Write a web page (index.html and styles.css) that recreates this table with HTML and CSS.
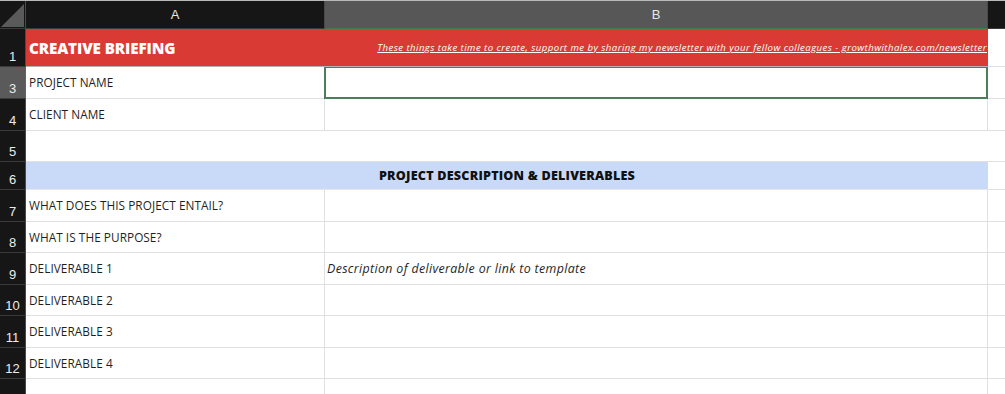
FILE: index.html
```html
<!DOCTYPE html>
<html lang="en">
<head>
<meta charset="utf-8">
<title>Creative Briefing</title>
<link rel="stylesheet" href="styles.css">
</head>
<body>
<div class="sheet">
  <div class="row head-row">
    <div class="corner"><span class="corner-tri"></span></div>
    <div class="colhead">A</div>
    <div class="colhead sel">B</div>
    <div class="colhead last"></div>
  </div>

  <div class="row r1">
    <div class="rowhead">1</div>
    <div class="cell span title-cell">
      <span class="title">CREATIVE BRIEFING</span>
      <span class="note">These things take time to create, support me by sharing my newsletter with your fellow colleagues - growthwithalex.com/newsletter</span>
    </div>
    <div class="cell extra"></div>
  </div>

  <div class="row r3">
    <div class="rowhead sel">3</div>
    <div class="cell a">PROJECT NAME</div>
    <div class="cell b active"><span class="handle"></span></div>
    <div class="cell extra"></div>
  </div>

  <div class="row r4">
    <div class="rowhead">4</div>
    <div class="cell a">CLIENT NAME</div>
    <div class="cell b"></div>
    <div class="cell extra"></div>
  </div>

  <div class="row r5">
    <div class="rowhead">5</div>
    <div class="cell span"></div>
    <div class="cell extra"></div>
  </div>

  <div class="row r6">
    <div class="rowhead">6</div>
    <div class="cell span section">PROJECT DESCRIPTION &amp; DELIVERABLES</div>
    <div class="cell extra"></div>
  </div>

  <div class="row r7">
    <div class="rowhead">7</div>
    <div class="cell a">WHAT DOES THIS PROJECT ENTAIL?</div>
    <div class="cell b"></div>
    <div class="cell extra"></div>
  </div>

  <div class="row r8">
    <div class="rowhead">8</div>
    <div class="cell a">WHAT IS THE PURPOSE?</div>
    <div class="cell b"></div>
    <div class="cell extra"></div>
  </div>

  <div class="row r9">
    <div class="rowhead">9</div>
    <div class="cell a">DELIVERABLE 1</div>
    <div class="cell b desc">Description of deliverable or link to template</div>
    <div class="cell extra"></div>
  </div>

  <div class="row r10">
    <div class="rowhead">10</div>
    <div class="cell a">DELIVERABLE 2</div>
    <div class="cell b"></div>
    <div class="cell extra"></div>
  </div>

  <div class="row r11">
    <div class="rowhead">11</div>
    <div class="cell a">DELIVERABLE 3</div>
    <div class="cell b"></div>
    <div class="cell extra"></div>
  </div>

  <div class="row r12">
    <div class="rowhead">12</div>
    <div class="cell a">DELIVERABLE 4</div>
    <div class="cell b"></div>
    <div class="cell extra"></div>
  </div>

  <div class="row r13">
    <div class="rowhead"></div>
    <div class="cell a"></div>
    <div class="cell b"></div>
    <div class="cell extra"></div>
  </div>
</div>
</body>
</html>
```

FILE: styles.css
```css
* { box-sizing: border-box; }
html, body { margin: 0; padding: 0; }
body {
  width: 1005px;
  height: 394px;
  overflow: hidden;
  background: #ffffff;
  font-family: "Open Sans", "Liberation Sans", sans-serif;
  color: #1f1f1f;
}
.sheet {
  display: flex;
  flex-direction: column;
  border-top: 1px solid #b9b9b9;
}
.row {
  display: grid;
  grid-template-columns: 26px 299px 663px 17px;
}
.head-row { height: 28px; }
.r1 { height: 38px; }
.r3, .r4, .r7, .r9, .r11 { height: 32px; }
.r5, .r8, .r10, .r12 { height: 31px; }
.r6 { height: 28px; }
.r13 { height: 20px; }

.corner {
  background: #161616;
  border-right: 1px solid #4a4a4a;
  border-bottom: 1px solid #3a3a3a;
  position: relative;
}
.corner-tri {
  position: absolute;
  right: 1px;
  bottom: 1px;
  width: 0;
  height: 0;
  border-left: 23px solid transparent;
  border-bottom: 23px solid #5a5a5a;
}
.colhead {
  background: #161616;
  color: #e6e6e6;
  font-family: "Liberation Sans", Arial, sans-serif;
  font-size: 13px;
  display: flex;
  align-items: center;
  justify-content: center;
  border-right: 1px solid #4a4a4a;
  border-bottom: 1px solid #3a3a3a;
}
.colhead.sel {
  background: #575757;
  border-bottom: 1px solid #3f7a52;
}
.colhead.last { border-right: none; }

.rowhead {
  background: #161616;
  color: #ececec;
  font-family: "Liberation Sans", Arial, sans-serif;
  font-size: 13px;
  display: flex;
  align-items: flex-end;
  justify-content: center;
  padding-bottom: 2px;
  border-bottom: 1px solid #3a3a3a;
  border-right: 1px solid #4a4a4a;
}
.rowhead.sel {
  background: #5a5a5a;
  border-right: 1px solid #3f7a52;
}

.cell {
  border-bottom: 1px solid #e0e0e0;
  border-right: 1px solid #e0e0e0;
  display: flex;
  align-items: center;
  font-size: 11.8px;
  letter-spacing: 0.05px;
  white-space: nowrap;
  overflow: hidden;
  padding-bottom: 1px;
}
.cell.a { padding-left: 3px; }
.cell.span { grid-column: span 2; }
.cell.extra { border-right: none; }

.title-cell {
  background: #d93a33;
  border-bottom: 1px solid #b3b3b3;
  border-right: none;
  justify-content: space-between;
  padding: 0 1px 0 3px;
}
.title {
  color: #ffffff;
  font-weight: 800;
  font-size: 15.2px;
  letter-spacing: -0.1px;
}
.note {
  color: #ffffff;
  font-style: italic;
  font-size: 9.6px;
  letter-spacing: 0.45px;
  text-decoration: underline;
}

.section {
  background: #c9daf8;
  justify-content: center;
  font-weight: 800;
  font-size: 12.6px;
  letter-spacing: 0.2px;
  color: #111;
  border-right: none;
  border-bottom: 1px solid #e6e6e6;
}

.r5 .cell.span { border-right: none; }

.active {
  position: relative;
  border: 2px solid #4b7f5c;
  border-top: 1px solid #4b7f5c;
  margin-left: -1px;
}
.handle {
  position: absolute;
  right: -4px;
  bottom: -4px;
  width: 5px;
  height: 5px;
  background: #4b7f5c;
  border: 1px solid #fff;
}
.desc {
  font-style: italic;
  font-size: 12.4px;
  letter-spacing: 0.35px;
  padding-left: 2px;
}
```
